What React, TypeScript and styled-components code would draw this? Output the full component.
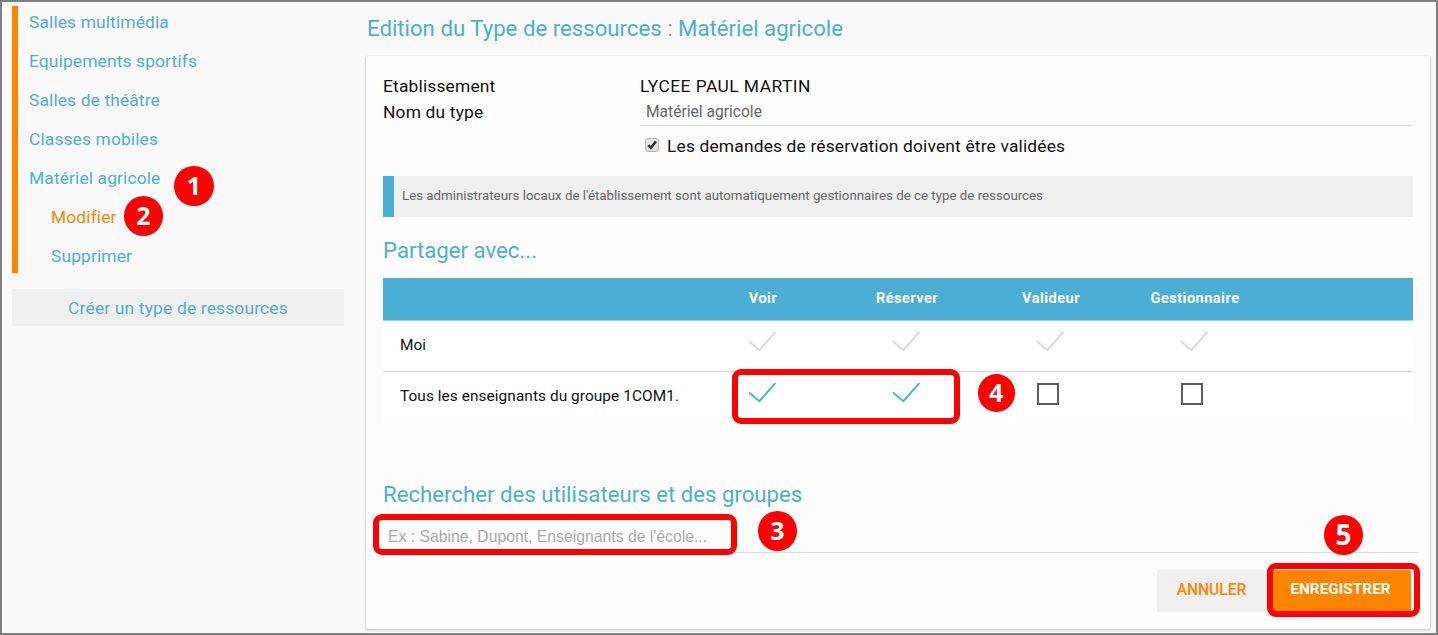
import React from "react";
import styled, { createGlobalStyle } from "styled-components";

const BLUE = "#4bafd5";
const ORANGE = "#ff8500";
const RED = "#ff0000";

const GlobalStyle = createGlobalStyle`
  * { box-sizing: border-box; }
  body { margin: 0; background: #f9f9f9; font-family: Roboto, sans-serif; color: #111; }
  h1, h2, ul, p { margin: 0; padding: 0; font-weight: 400; list-style: none; }
`;

const Frame = styled.div`
  position: relative;
  display: flex;
  width: 1438px;
  height: 635px;
  overflow: hidden;
  border: 2px solid #7f7f7f;
  background: #f9f9f9;
`;

const Sidebar = styled.aside`
  width: 332px;
  margin: 4px 22px 0 10px;
  display: flex;
  flex-direction: column;
  gap: 16px;
`;

const Nav = styled.ul`
  height: 267px;
  border-left: 6px solid ${ORANGE};
  padding-left: 11px;
  display: flex;
  flex-direction: column;
  justify-content: space-between;
`;

const NavItem = styled.li<{ $nested?: boolean; $active?: boolean }>`
  height: 33px;
  line-height: 33px;
  font-size: 17.4px;
  white-space: nowrap;
  letter-spacing: 0.13px;
  padding-left: ${(p) => (p.$nested ? 22 : 0)}px;
  color: ${(p) => (p.$active ? ORANGE : BLUE)};
`;

const CreateButton = styled.button`
  height: 37px;
  border: 0;
  padding: 0;
  border-radius: 2px;
  background: #efefef;
  color: ${BLUE};
  font: 17.4px Roboto, sans-serif;
  letter-spacing: 0.17px;
`;

const Main = styled.main`
  width: 1064px;
  display: flex;
  flex-direction: column;
`;

const PageTitle = styled.h1`
  height: 54px;
  line-height: 52px;
  padding-left: 1px;
  font-size: 22.2px;
  color: ${BLUE};
`;

const Card = styled.section`
  height: 573px;
  padding: 17px 17px 0;
  border-radius: 3px;
  background: #fdfdfd;
  box-shadow: 0 1px 2px 1px rgba(0, 0, 0, 0.14);
  display: flex;
  flex-direction: column;
`;

const Field = styled.div<{ $h: number }>`
  display: grid;
  grid-template-columns: 257px 1fr;
  height: ${(p) => p.$h}px;
  line-height: 26px;
  font-size: 17.4px;
`;

const Label = styled.span<{ $track?: number }>`
  letter-spacing: ${(p) => p.$track ?? 0.17}px;
`;

const NameInput = styled.div`
  height: 27px;
  line-height: 27px;
  padding-left: 6px;
  border-bottom: 1px solid #dcdcdc;
  font-size: 15.6px;
  color: #666;
`;

const Validation = styled.label`
  display: flex;
  align-items: center;
  height: 40px;
  margin-left: 262px;
  gap: 8px;
  font-size: 17.4px;
  letter-spacing: 0.16px;
`;

const Tick = styled.span`
  width: 14px;
  height: 14px;
  margin-bottom: 3px;
  border: 1px solid #b3b3b3;
  border-radius: 3px;
  background: linear-gradient(#ededed, #dcdcdc);
  display: flex;
`;

const Notice = styled.p`
  height: 41px;
  line-height: 40px;
  margin-top: 10px;
  padding-left: 8px;
  border-left: 11px solid ${BLUE};
  background: #efefef;
  color: #666;
  font-size: 13.3px;
`;

const SectionTitle = styled.h2<{ $top: number }>`
  height: 34px;
  line-height: 30px;
  margin-top: ${(p) => p.$top}px;
  font-size: 22.2px;
  color: ${BLUE};
`;

const Table = styled.div`
  margin-top: 9px;
  background: #fff;
`;

const Row = styled.div<{ $head?: boolean }>`
  display: grid;
  grid-template-columns: 308px repeat(4, 144px) 1fr;
  height: ${(p) => (p.$head ? 43 : 51)}px;
  border-bottom: 1px solid ${(p) => (p.$head ? "#a9cddc" : "#d6d6d6")};
  background: ${(p) => (p.$head ? BLUE : "#fff")};
  &:last-child { border-bottom-color: #fff; }
`;

const HeadCell = styled.span`
  line-height: 42px;
  text-align: center;
  font-size: 14.5px;
  letter-spacing: 0.5px;
  font-weight: 700;
  color: #fff;
`;

const NameCell = styled.span`
  padding-left: 17px;
  line-height: 49px;
  font-size: 15.4px;
  letter-spacing: 0.07px;
`;

const Cell = styled.span`
  padding: 11px 0 0 58px;
`;

const EmptyBox = styled.span`
  display: block;
  width: 22px;
  height: 22px;
  border: 2px solid #5c5c5c;
  background: #fff;
`;

const SearchField = styled.div`
  width: 1035px;
  height: 40px;
  padding-left: 5px;
  border-bottom: 1px solid #dcdcdc;
  font: 15.75px/48px "Liberation Sans", Arial, sans-serif;
  color: #a9a9a9;
`;

const Actions = styled.div`
  display: flex;
  justify-content: flex-end;
  margin-top: 17px;
`;

const ActionButton = styled.button<{ $primary?: boolean }>`
  width: ${(p) => (p.$primary ? 138 : 116)}px;
  height: 42px;
  margin-right: ${(p) => (p.$primary ? 2 : 0)}px;
  padding: 0 ${(p) => (p.$primary ? 3 : 7)}px ${(p) => (p.$primary ? 4 : 3)}px 0;
  border: 0;
  border-radius: 2px;
  background: ${(p) => (p.$primary ? ORANGE : "#efefef")};
  color: ${(p) => (p.$primary ? "#fff" : ORANGE)};
  font: ${(p) => (p.$primary ? "700 15.4px" : "500 15.6px")} Roboto, sans-serif;
`;

const Step = styled.span<{ $x: number; $y: number; $s?: number; $font?: number }>`
  position: absolute;
  left: ${(p) => p.$x - 2}px;
  top: ${(p) => p.$y - 2}px;
  width: ${(p) => p.$s ?? 39}px;
  height: ${(p) => (p.$s ?? 39) + 0.5}px;
  border-radius: 50%;
  background: ${RED};
  color: #fff;
  text-align: center;
  font: 700 ${(p) => p.$font ?? 25}px / ${(p) => (p.$s ?? 39) - 0.5}px "Open Sans", sans-serif;
`;

const Highlight = styled.div<{ $x: number; $y: number; $w: number; $h: number }>`
  position: absolute;
  left: ${(p) => p.$x - 2}px;
  top: ${(p) => p.$y - 2}px;
  width: ${(p) => p.$w}px;
  height: ${(p) => p.$h}px;
  border: 6px solid ${RED};
  border-radius: 9px;
`;

const Check = ({ color }: { color: string }) => (
  <svg width="27" height="20" viewBox="0 0 27 20" fill="none" style={{ display: "block" }}>
    <path d="M-1 8.6L10.4 18.2L27.2 -1" stroke={color} strokeWidth="1.9" />
    <path d="M0 0.5h1.2" stroke={color} strokeOpacity="0.4" />
  </svg>
);

const columns = ["Voir", "Réserver", "Valideur", "Gestionnaire"];
const people = [
  { name: "Moi", color: "#d8d8d8", rights: [true, true, true, true] },
  { name: "Tous les enseignants du groupe 1COM1.", color: "#3fbfa9", rights: [true, true, false, false] },
];

export default function App() {
  return (
    <Frame>
      <GlobalStyle />
      <Sidebar>
        <Nav>
          <NavItem>Salles multimédia</NavItem>
          <NavItem>Equipements sportifs</NavItem>
          <NavItem>Salles de théâtre</NavItem>
          <NavItem>Classes mobiles</NavItem>
          <NavItem>Matériel agricole</NavItem>
          <NavItem $nested $active>Modifier</NavItem>
          <NavItem $nested>Supprimer</NavItem>
        </Nav>
        <CreateButton>Créer un type de ressources</CreateButton>
      </Sidebar>
      <Main>
        <PageTitle>Edition du Type de ressources : Matériel agricole</PageTitle>
        <Card>
          <Field $h={26}>
            <Label>Etablissement</Label>
            <Label $track={0.45}>LYCEE PAUL MARTIN</Label>
          </Field>
          <Field $h={27}>
            <Label>Nom du type</Label>
            <NameInput>Matériel agricole</NameInput>
          </Field>
          <Validation>
            <Tick>
              <svg width="12" height="12" viewBox="0 0 12 12" fill="none">
                <path d="M2.2 6.2L4.8 8.8L10 2.4" stroke="#333" strokeWidth="2.6" />
              </svg>
            </Tick>
            Les demandes de réservation doivent être validées
          </Validation>
          <Notice>
            Les administrateurs locaux de l'établissement sont automatiquement gestionnaires de ce type de ressources
          </Notice>
          <SectionTitle $top={18}>Partager avec...</SectionTitle>
          <Table>
            <Row $head>
              <span />
              {columns.map((c) => <HeadCell key={c}>{c}</HeadCell>)}
            </Row>
            {people.map((p) => (
              <Row key={p.name}>
                <NameCell>{p.name}</NameCell>
                {p.rights.map((on, i) => (
                  <Cell key={columns[i]}>{on ? <Check color={p.color} /> : <EmptyBox />}</Cell>
                ))}
              </Row>
            ))}
          </Table>
          <SectionTitle $top={56}>Rechercher des utilisateurs et des groupes</SectionTitle>
          <SearchField>Ex : Sabine, Dupont, Enseignants de l'école...</SearchField>
          <Actions>
            <ActionButton>ANNULER</ActionButton>
            <ActionButton $primary>ENREGISTRER</ActionButton>
          </Actions>
        </Card>
      </Main>

      <Highlight $x={732} $y={369} $w={228} $h={55} />
      <Highlight $x={373} $y={514} $w={364} $h={41} />
      <Highlight $x={1267} $y={563} $w={153} $h={54} />
      <Step $x={174} $y={165.5} $s={40}>1</Step>
      <Step $x={124} $y={196}>2</Step>
      <Step $x={758} $y={511}>3</Step>
      <Step $x={977.5} $y={374} $s={37.5}>4</Step>
      <Step $x={1324} $y={515} $font={28}>5</Step>
    </Frame>
  );
}
